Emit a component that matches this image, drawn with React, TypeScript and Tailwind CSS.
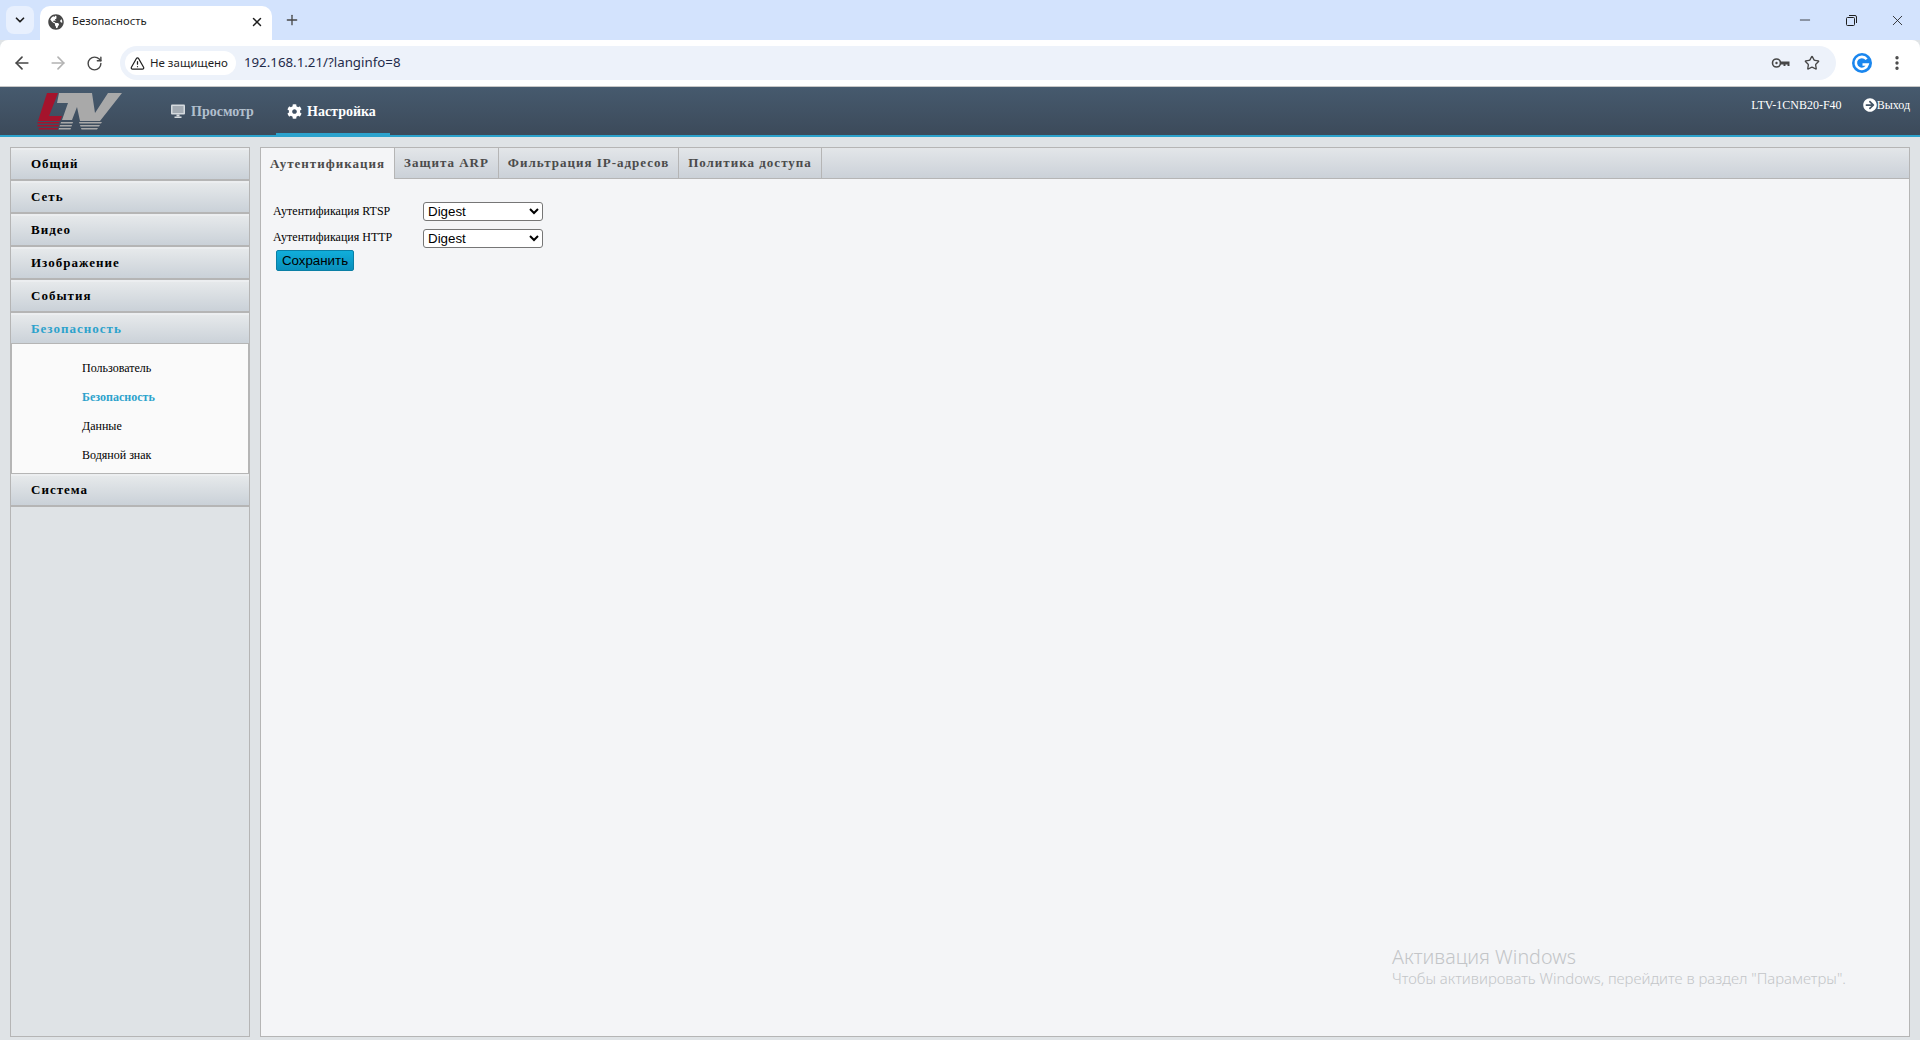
import React from "react";
import { ArrowLeft, ArrowRight, RotateCw, Star, EllipsisVertical, X, Plus, Minus, ChevronDown, TriangleAlert } from "lucide-react";
import { FaCog, FaArrowCircleRight, FaGlobeAmericas } from "react-icons/fa";

const ui = "font-['Noto_Sans','Open_Sans',sans-serif]";
const serif = "font-['Liberation_Serif',serif]";
const arial = "font-['Liberation_Sans',Arial,sans-serif]";

function Logo() {
  return (
    <svg width="120" height="50" viewBox="0 0 120 50" className="block">
      <polygon points="27,8 38,8 29,31 42,31 40,36 18,36" fill="#a5132c" />
      <polygon points="17.5,37 39.5,37 39,38.5 17.5,38.5" fill="#a5132c" />
      <polygon points="17.5,40 39,40 38.5,41.5 17.5,41.5" fill="#a5132c" />
      <polygon points="18.5,43 38,43 37.5,44.5 19,44.5" fill="#a5132c" />
      <polygon points="39,8 72,8 75,28 88,8 102,8 80,36 60,36 57,22 52,35 42,35 48,18 37,18" fill="#a9a9a9" />
      <polygon points="41,37 53,37 52.5,38.5 40.5,38.5" fill="#a9a9a9" />
      <polygon points="40,40 52,40 51.5,41.5 39.5,41.5" fill="#a9a9a9" />
      <polygon points="39,43 51,43 50.5,44.5 38.5,44.5" fill="#a9a9a9" />
      <polygon points="59,37 82,37 81,38.5 59.5,38.5" fill="#a9a9a9" />
      <polygon points="60,40 80,40 79,41.5 60.5,41.5" fill="#a9a9a9" />
      <polygon points="61,43 78,43 77,44.5 61.5,44.5" fill="#a9a9a9" />
    </svg>
  );
}

function MonitorIcon() {
  return (
    <svg width="14" height="14" viewBox="0 0 14 14" className="block">
      <rect x="0" y="0.5" width="14" height="10" rx="1" fill="#d5dade" />
      <rect x="1.5" y="2" width="11" height="7" fill="#a3abb3" />
      <rect x="5.5" y="10.5" width="3" height="2" fill="#d5dade" />
      <rect x="3.5" y="12.5" width="7" height="1.5" fill="#d5dade" />
    </svg>
  );
}

function KeyIcon() {
  return (
    <svg width="20" height="12" viewBox="0 0 20 12" fill="none" className="block">
      <circle cx="5.5" cy="6" r="4" stroke="#474747" strokeWidth="1.6" />
      <circle cx="5.5" cy="6" r="1.2" fill="#474747" />
      <path d="M9.5 4.5H18.5V9H16.5V7.5H14.5V9H12.5V7.5H9.5" fill="#474747" />
    </svg>
  );
}

function GIcon() {
  return (
    <svg width="20" height="20" viewBox="0 0 20 20" className="block">
      <circle cx="10" cy="10" r="10" fill="#1a86ee" />
      <path d="M14.6 6.3A6 6 0 1 0 15.6 11.5H10.5" fill="none" stroke="#fff" strokeWidth="2.6" />
    </svg>
  );
}

function RestoreIcon() {
  return (
    <svg width="11" height="11" viewBox="0 0 11 11" fill="none" stroke="#1f1f1f" strokeWidth="1" className="block">
      <rect x="0.5" y="2.5" width="8" height="8" rx="1" />
      <path d="M3 0.5H9A1.5 1.5 0 0 1 10.5 2V8" />
    </svg>
  );
}

function BrowserChrome() {
  return (
    <div className={`${ui} shrink-0`}>
      <div className="h-10 bg-[#d3e3fd] flex items-end relative">
        <div className="w-[28px] h-[28px] ml-[6px] mb-[6px] rounded-lg bg-[#e8f0fe] flex items-center justify-center">
          <ChevronDown size={14} strokeWidth={3} color="#1f1f1f" />
        </div>
        <div className="w-[232px] h-[34px] ml-[6px] bg-white rounded-t-[10px] flex items-center pl-[8px] pr-[8px] pb-[3px]">
          <FaGlobeAmericas size={16} color="#474747" />
          <span className="ml-[8px] text-[11.3px] text-[#1f1f1f] flex-1">Безопасность</span>
          <X size={14} strokeWidth={2.5} color="#1f1f1f" />
        </div>
        <div className="w-[16px] ml-[12px] mb-[6px] self-end h-[28px] flex items-center justify-center">
          <Plus size={16} color="#474747" />
        </div>
        <div className="ml-auto flex items-center h-10 self-start">
          <div className="w-[46px] flex justify-center"><Minus size={16} strokeWidth={1.2} color="#1f1f1f" /></div>
          <div className="w-[46px] flex justify-center"><RestoreIcon /></div>
          <div className="w-[46px] flex justify-center"><X size={17} strokeWidth={1.2} color="#1f1f1f" /></div>
        </div>
      </div>
      <div className="h-[47px] bg-white border-b border-[#c7c7c7] flex items-center rounded-t-lg">
        <div className="w-[120px] flex items-center shrink-0 pl-[12px]">
          <ArrowLeft size={20} color="#474747" strokeWidth={2} />
          <ArrowRight size={20} color="#b3b3b3" strokeWidth={2} className="ml-[16px]" />
          <RotateCw size={17} color="#474747" strokeWidth={2} className="ml-[18px]" />
        </div>
        <div className="flex-1 h-[34px] rounded-full bg-[#edf2fa] flex items-center pl-[5px]">
          <div className="h-[24px] bg-white rounded-full flex items-center pl-[5px] pr-[8px]">
            <TriangleAlert size={15} color="#1f1f1f" strokeWidth={2} />
            <span className="ml-[5px] text-[11.5px] text-[#1f1f1f]">Не защищено</span>
          </div>
          <span className="ml-[8px] text-[13.3px] text-[#1f2b4a]">192.168.1.21/?langinfo=8</span>
          <div className="ml-auto flex items-center pr-[16px]">
            <div className="ml-[2px]"><KeyIcon /></div>
            <Star size={16} color="#474747" strokeWidth={2} className="ml-[13px]" />
          </div>
        </div>
        <div className="w-[84px] shrink-0 flex items-center pl-[16px]">
          <GIcon />
          <EllipsisVertical size={18} color="#474747" strokeWidth={2.5} className="ml-[16px]" />
        </div>
      </div>
    </div>
  );
}

function Header() {
  return (
    <div className={`${serif} shrink-0 h-[50px] bg-gradient-to-b from-[#465a6e] to-[#3c4a5a] border-b-2 border-[#2ca2cc] flex`}>
      <div className="w-[160px] pl-[20px] shrink-0 -mt-[2px]"><Logo /></div>
      <div className="w-[116px] shrink-0 flex items-center pl-[11px] h-[48px] text-[#b1bfcd] font-bold text-[14px]">
        <MonitorIcon />
        <span className="ml-[6px]">Просмотр</span>
      </div>
      <div className="w-[114px] shrink-0 h-[50px] border-b-4 border-[#2ca2cc] flex items-center pl-[11px] pt-[2px] text-white font-bold text-[14px]">
        <FaCog size={15} color="#fff" />
        <span className="ml-[5px]">Настройка</span>
      </div>
      <div className="ml-auto flex h-[47px] items-center pb-[11px] text-white text-[12px]">
        <span>LTV-1CNB20-F40</span>
        <FaArrowCircleRight size={14} color="#fff" className="ml-[21px]" />
        <span className="mr-[10px]">Выход</span>
      </div>
    </div>
  );
}

function MenuHead({ label, active }: { label: string; active?: boolean }) {
  return (
    <div className="h-[33px] shrink-0 border-b-2 border-b-[#b5b5b5] border-t-2 border-t-[#eceef0] -mb-px">
      <div className={`h-full bg-gradient-to-b from-[#e6e9eb] to-[#cad1d8] pl-[20px] pb-[2px] flex items-center font-bold text-[13px] tracking-[1px] ${active ? "text-[#2ca2cc]" : "text-black"}`}>
        {label}
      </div>
    </div>
  );
}

function Sidebar() {
  const items = ["Пользователь", "Безопасность", "Данные", "Водяной знак"];
  return (
    <div className={`${serif} w-[240px] shrink-0 border border-[#b5b5b5] flex flex-col`}>
      <div className="flex flex-col gap-px">
        <MenuHead label="Общий" />
        <MenuHead label="Сеть" />
        <MenuHead label="Видео" />
        <MenuHead label="Изображение" />
        <MenuHead label="События" />
        <MenuHead label="Безопасность" active />
      </div>
      <div className="h-[131px] -mt-[2px] bg-[#fafafa] border border-[#b5b5b5] pt-[10px] pl-[70px] text-[12px] shrink-0">
        {items.map((t, i) => (
          <div key={t} className={`h-[29px] leading-[29px] ${i === 1 ? "text-[#2ca2cc] font-bold" : "text-black"}`}>{t}</div>
        ))}
      </div>
      <MenuHead label="Система" />
    </div>
  );
}

function Tab({ label, active, w }: { label: string; active?: boolean; w: number }) {
  return (
    <div
      className={`h-full shrink-0 flex items-center justify-center border-r border-[#b5b5b5] font-bold text-[13px] tracking-[1px] text-[#4b4b4b] ${active ? "bg-[#f4f5f7] text-[#4a4a4a]" : "bg-gradient-to-b from-[#e3e6e9] to-[#cbd1d8] border-b border-b-[#b5b5b5]"}`}
      style={{ width: w }}
    >
      {label}
    </div>
  );
}

function Row({ label, up }: { label: string; up?: boolean }) {
  return (
    <div className="flex items-center h-[27px]">
      <span className={`${serif} w-[162px] pl-[12px] shrink-0 text-[12px] text-black relative ${up ? "-top-[2px]" : "-top-[1px]"}`}>{label}</span>
      <select className={`${arial} w-[120px] h-[19px] text-[13.33px] text-black bg-white border border-[#767676] rounded-[3px] appearance-auto`}>
        <option>Digest</option>
      </select>
    </div>
  );
}

function Main() {
  return (
    <div className={`${serif} relative flex-1 ml-[10px] bg-[#f4f5f7] border border-[#b5b5b5] flex flex-col`}>
      <div className="h-[31px] flex shrink-0">
        <Tab label="Аутентификация" active w={134} />
        <Tab label="Защита ARP" w={104} />
        <Tab label="Фильтрация IP-адресов" w={180} />
        <Tab label="Политика доступа" w={143} />
        <div className="flex-1 bg-gradient-to-b from-[#e3e6e9] to-[#cbd1d8] border-b border-b-[#b5b5b5]" />
      </div>
      <div className="pt-[19px]">
        <Row label="Аутентификация RTSP" />
        <Row label="Аутентификация HTTP" up />
        <button className={`${arial} ml-[15px] block w-[78px] h-[21px] rounded-[2px] border border-[#0a7fa5] bg-gradient-to-b from-[#10aedb] to-[#0a8fbc] text-[13.33px] text-black leading-none -mt-[2px]`}>
          Сохранить
        </button>
      </div>
      <div className={`${ui} absolute left-[1131px] top-[797px] font-light leading-none text-[#c3c5c8]`}>
        <div className="text-[19.7px] leading-[24px]">Активация Windows</div>
        <div className="text-[14.9px] leading-[19px]">Чтобы активировать Windows, перейдите в раздел "Параметры".</div>
      </div>
    </div>
  );
}

export default function App() {
  return (
    <div className="w-[1920px] h-[1040px] overflow-hidden bg-[#dfe3e6] flex flex-col">
      <BrowserChrome />
      <Header />
      <div className="flex-1 min-h-0 flex pl-[10px] pr-[10px] pt-[10px] pb-[3px]">
        <Sidebar />
        <Main />
      </div>
    </div>
  );
}
